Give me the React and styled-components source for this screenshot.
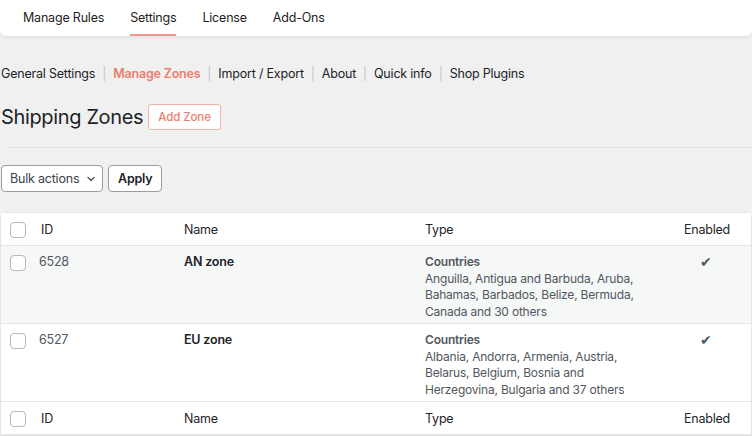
import React from 'react';
import styled, { createGlobalStyle } from 'styled-components';

const GlobalStyle = createGlobalStyle`
  body {
    margin: 0;
    background: #f0f0f1;
    font-family: Inter, "Noto Sans", "Liberation Sans", sans-serif;
    font-size: 12.5px;
    letter-spacing: -0.2px;
    color: #1d2327;
  }
`;

const accent = '#e9806e';

const Page = styled.div`
  width: 752px;
  height: 436px;
  overflow: hidden;
`;

const TopNav = styled.nav`
  height: 36px;
  background: #fff;
  border-radius: 0 0 6px 6px;
  box-shadow: 0 1px 4px rgba(0, 0, 0, 0.08);
  display: flex;
  align-items: stretch;
  gap: 26px;
  padding-left: 23px;
`;

const Tab = styled.a`
  display: flex;
  align-items: center;
  font-size: 12.5px;
  color: #1e1e1e;
  text-decoration: none;
  border-bottom: 2px solid ${p => (p.active ? '#ec9a8b' : 'transparent')};
`;

const Content = styled.div`
  padding: 27px 0 0 1px;
`;

const SubNav = styled.div`
  display: flex;
  align-items: center;
  height: 20px;
  font-size: 12.5px;
`;

const SubLink = styled.a`
  color: ${p => (p.active ? accent : '#1d2327')};
  font-weight: ${p => (p.active ? 600 : 400)};
  text-decoration: none;
`;

const Sep = styled.span`
  color: #c3c4c7;
  margin: 0 7px;
`;

const HeadingRow = styled.div`
  display: flex;
  align-items: center;
  gap: 5px;
  margin-top: 21px;
  height: 26px;
`;

const Heading = styled.h1`
  margin: 0;
  font-size: 20px;
  font-weight: 400;
  color: #1d2327;
  letter-spacing: -0.35px;
`;

const OutlineButton = styled.button`
  height: 26px;
  padding: 0 9px;
  background: #fff;
  border: 1px solid #efb3a7;
  border-radius: 3px;
  color: ${accent};
  font-family: inherit;
  font-size: 11.5px;
  letter-spacing: -0.1px;
  font-weight: 500;
`;

const Divider = styled.hr`
  margin: 17px 0 0 7px;
  border: 0;
  border-top: 1px solid #e2e2e4;
  height: 0;
`;

const Actions = styled.div`
  display: flex;
  gap: 5px;
  margin-top: 17px;
`;

const Select = styled.div`
  height: 27px;
  box-sizing: border-box;
  width: 102px;
  display: flex;
  align-items: center;
  justify-content: space-between;
  padding: 0 6px 0 8px;
  background: #fff;
  border: 1px solid #9a9ca1;
  border-radius: 4px;
  color: #3c434a;
  font-size: 12.5px;
`;

const Button = styled.button`
  height: 27px;
  padding: 0 9px;
  background: #fff;
  border: 1px solid #9a9ca1;
  border-radius: 4px;
  color: #1d2327;
  font-family: inherit;
  font-size: 12.5px;
  letter-spacing: -0.2px;
  font-weight: 600;
`;

const Table = styled.div`
  margin-top: 20px;
  margin-left: -1px;
  background: #fff;
  border: 1px solid #e4e4e6;
  border-radius: 6px 6px 0 0;
`;

const Row = styled.div`
  display: grid;
  grid-template-columns: 38px 145px 241px 1fr 88px;
  align-items: ${p => (p.head ? 'center' : 'start')};
  height: ${p => (p.head ? '33px' : '78px')};
  box-sizing: border-box;
  padding-top: ${p => (p.head ? '0' : '7px')};
  background: ${p => (p.striped ? '#f6f7f7' : '#fff')};
  border-bottom: 1px solid #e4e4e6;
`;

const Check = styled.span`
  display: block;
  width: 16px;
  height: 16px;
  box-sizing: border-box;
  margin-left: 9px;
  margin-top: 2px;
  border: 1px solid #b5b7bb;
  border-radius: 4px;
  background: #fff;
`;

const HeadCell = styled.div`
  color: #1d2327;
  font-size: 12.5px;
  text-align: ${p => (p.center ? 'center' : 'left')};
  padding-left: ${p => (p.indent ? '2px' : '0')};
`;

const IdCell = styled.div`
  color: #50575e;
  font-size: 12.5px;
  line-height: 18px;
`;

const NameCell = styled.div`
  font-weight: 600;
  font-size: 12.5px;
  line-height: 18px;
  color: #1d2327;
`;

const TypeCell = styled.div`
  color: #50575e;
  font-size: 12px;
  line-height: 16.5px;
  padding-right: 8px;
  padding-top: 1px;
`;

const TypeTitle = styled.div`
  font-weight: 600;
`;

const Enabled = styled.div`
  text-align: center;
  color: #50575e;
  font-size: 14px;
  line-height: 18px;
  padding-right: 3px;
`;

const zones = [
  {
    id: 6528,
    name: 'AN zone',
    countries: 'Anguilla, Antigua and Barbuda, Aruba, Bahamas, Barbados, Belize, Bermuda, Canada and 30 others',
  },
  {
    id: 6527,
    name: 'EU zone',
    countries: 'Albania, Andorra, Armenia, Austria, Belarus, Belgium, Bosnia and Herzegovina, Bulgaria and 37 others',
  },
];

const HeaderRow = () => (
  <Row head>
    <Check />
    <HeadCell indent>ID</HeadCell>
    <HeadCell>Name</HeadCell>
    <HeadCell>Type</HeadCell>
    <HeadCell center>Enabled</HeadCell>
  </Row>
);

const App = () => (
  <Page>
    <GlobalStyle />
    <TopNav>
      <Tab href="#">Manage Rules</Tab>
      <Tab href="#" active>Settings</Tab>
      <Tab href="#">License</Tab>
      <Tab href="#">Add-Ons</Tab>
    </TopNav>
    <Content>
      <SubNav>
        <SubLink href="#">General Settings</SubLink>
        <Sep>|</Sep>
        <SubLink href="#" active>Manage Zones</SubLink>
        <Sep>|</Sep>
        <SubLink href="#">Import / Export</SubLink>
        <Sep>|</Sep>
        <SubLink href="#">About</SubLink>
        <Sep>|</Sep>
        <SubLink href="#">Quick info</SubLink>
        <Sep>|</Sep>
        <SubLink href="#">Shop Plugins</SubLink>
      </SubNav>
      <HeadingRow>
        <Heading>Shipping Zones</Heading>
        <OutlineButton>Add Zone</OutlineButton>
      </HeadingRow>
      <Divider />
      <Actions>
        <Select>
          Bulk actions
          <svg width="10" height="10" viewBox="0 0 10 10">
            <path d="M2 3.5 L5 6.5 L8 3.5" fill="none" stroke="#50575e" strokeWidth="1.4" strokeLinecap="round" strokeLinejoin="round" />
          </svg>
        </Select>
        <Button>Apply</Button>
      </Actions>
      <Table>
        <HeaderRow />
        {zones.map((z, i) => (
          <Row key={z.id} striped={i % 2 === 0}>
            <Check />
            <IdCell>{z.id}</IdCell>
            <NameCell>{z.name}</NameCell>
            <TypeCell>
              <TypeTitle>Countries</TypeTitle>
              {z.countries}
            </TypeCell>
            <Enabled>✔</Enabled>
          </Row>
        ))}
        <HeaderRow />
      </Table>
    </Content>
  </Page>
);

export default App;
